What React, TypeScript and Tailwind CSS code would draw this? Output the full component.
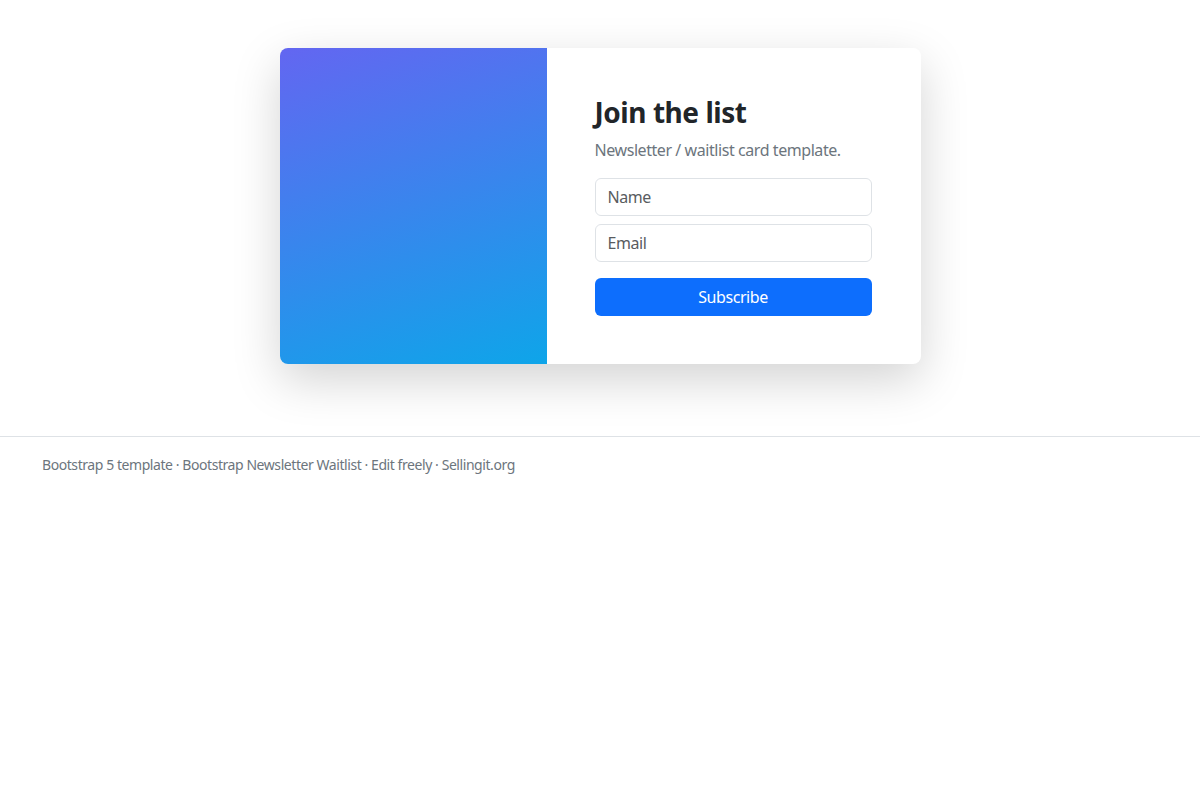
export default function App() {
  return (
    <div className="min-h-screen bg-white font-['Noto_Sans',sans-serif] tracking-[-0.027em] text-[#212529]">
      <main className="py-12">
        <div className="mx-auto flex w-[641px] overflow-hidden rounded-lg bg-white shadow-[0_1rem_3rem_rgba(0,0,0,0.175)]">
          <div className="w-[267px] shrink-0 bg-[linear-gradient(162deg,#6366f1,#0ea5e9)]" />
          <div className="flex-1 py-12 pl-12 pr-[49px]">
            <h3 className="mb-2 text-[28px] font-bold leading-[1.2] tracking-[-0.016em]">Join the list</h3>
            <p className="mb-4 text-base leading-6 text-[#6c757d]">Newsletter / waitlist card template.</p>
            <form onSubmit={(e) => e.preventDefault()}>
              <input
                type="text"
                placeholder="Name"
                className="mb-2 block h-[38px] w-full rounded-md border border-[#dee2e6] px-3 text-base tracking-[-0.027em] text-[#212529] outline-none placeholder:text-[#595c5f]"
              />
              <input
                type="email"
                placeholder="Email"
                className="mb-4 block h-[38px] w-full rounded-md border border-[#dee2e6] px-3 text-base tracking-[-0.027em] text-[#212529] outline-none placeholder:text-[#595c5f]"
              />
              <button
                type="submit"
                className="block h-[38px] w-full rounded-md bg-[#0d6efd] text-base text-white"
              >
                Subscribe
              </button>
            </form>
          </div>
        </div>
      </main>
      <footer className="mt-6 border-t border-[#dee2e6] px-[42px] py-[17px]">
        <p className="text-sm leading-[21px] text-[#6c757d]">
          Bootstrap 5 template · Bootstrap Newsletter Waitlist · Edit freely · Sellingit.org
        </p>
      </footer>
    </div>
  );
}
